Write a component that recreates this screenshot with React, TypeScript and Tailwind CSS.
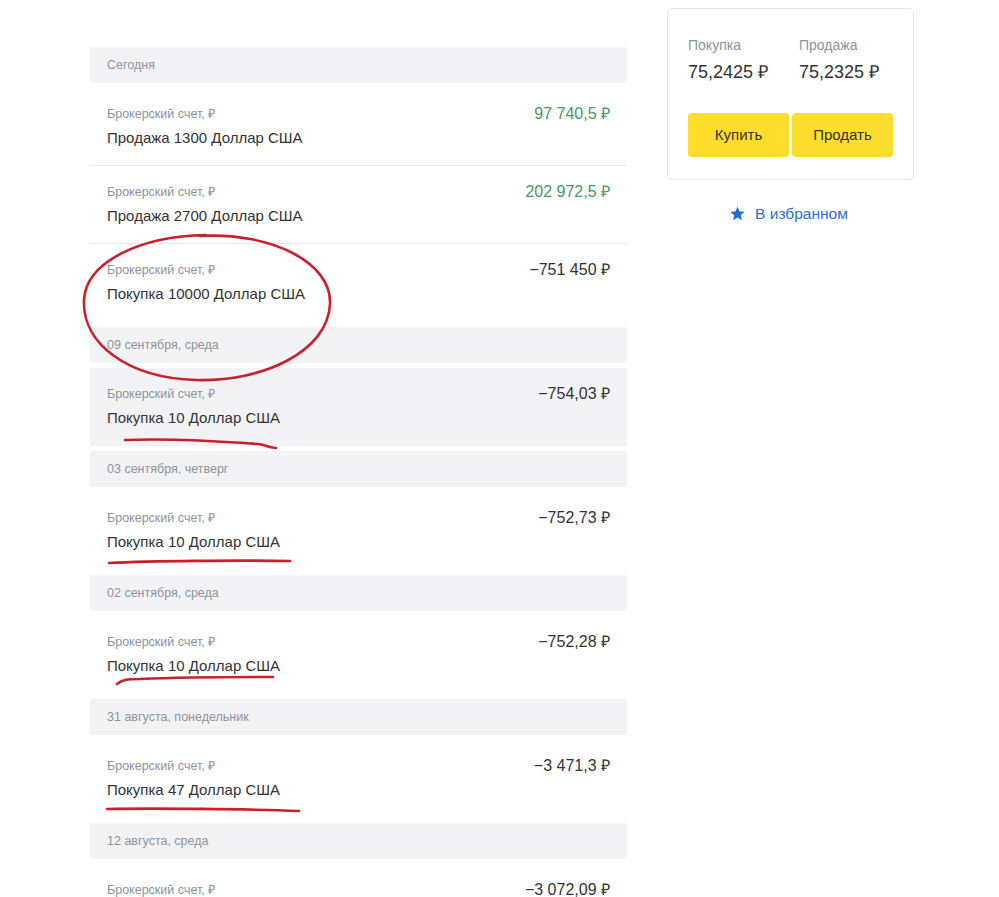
import React from 'react'

type Op = { title: string; amount: string; positive?: boolean; hovered?: boolean }
type Group = { date: string; ops: Op[] }

const groups: Group[] = [
    {
        date: 'Сегодня',
        ops: [
            { title: 'Продажа 1300 Доллар США', amount: '97 740,5 ₽', positive: true },
            { title: 'Продажа 2700 Доллар США', amount: '202 972,5 ₽', positive: true },
            { title: 'Покупка 10000 Доллар США', amount: '−751 450 ₽' },
        ],
    },
    { date: '09 сентября, среда', ops: [{ title: 'Покупка 10 Доллар США', amount: '−754,03 ₽', hovered: true }] },
    { date: '03 сентября, четверг', ops: [{ title: 'Покупка 10 Доллар США', amount: '−752,73 ₽' }] },
    { date: '02 сентября, среда', ops: [{ title: 'Покупка 10 Доллар США', amount: '−752,28 ₽' }] },
    { date: '31 августа, понедельник', ops: [{ title: 'Покупка 47 Доллар США', amount: '−3 471,3 ₽' }] },
    { date: '12 августа, среда', ops: [{ title: 'Покупка 10 Доллар США', amount: '−3 072,09 ₽' }] },
]

const OpRow = ({ op, last }: { op: Op; last: boolean }) => (
    <div className={`h-[78px] flex justify-between px-[17px] pt-[16px] ${op.hovered ? 'bg-[#f3f3f6]' : ''} ${last ? '' : 'border-b border-[#e7e8ea]'}`}>
        <div className="flex flex-col">
            <span className="text-[12.5px] leading-[20px] text-[#8d939b]">Брокерский счет, ₽</span>
            <span className="text-[15px] leading-[20px] mt-[4px] text-[#333]">{op.title}</span>
        </div>
        <span className={`text-[16px] leading-[20px] ${op.positive ? 'text-[#46995f]' : 'text-[#333]'}`}>{op.amount}</span>
    </div>
)

const Annotations = () => (
    <svg className="absolute inset-0 pointer-events-none" width="999" height="897" viewBox="0 0 999 897" fill="none">
        <path
            d="M200 236 C 270 232, 332 262, 330 304 C 328 352, 262 382, 196 380 C 128 378, 82 344, 84 300 C 86 262, 140 236, 206 235"
            stroke="#c8202c" strokeWidth="2.6" strokeLinecap="round"
        />
        <path d="M125 440 C 170 438, 230 442, 258 444 C 266 445, 270 448, 276 448" stroke="#c8202c" strokeWidth="2.6" strokeLinecap="round" />
        <path d="M109 563 C 150 561, 240 560, 290 561" stroke="#c8202c" strokeWidth="2.6" strokeLinecap="round" />
        <path d="M117 684 C 122 680, 126 679, 140 679 C 190 677, 250 677, 273 677" stroke="#c8202c" strokeWidth="2.6" strokeLinecap="round" />
        <path d="M107 809 C 150 808, 250 809, 299 811" stroke="#c8202c" strokeWidth="2.6" strokeLinecap="round" />
    </svg>
)

export default function App() {
    return (
        <div className="relative w-[999px] h-[897px] overflow-hidden bg-white" style={{ fontFamily: '"Liberation Sans", Arial, sans-serif' }}>
            <div className="flex gap-[40px] pl-[90px]">
                <div className="w-[537px] pt-[47px] flex flex-col">
                    {groups.map((g) => (
                        <div key={g.date} className="flex flex-col">
                            <div className="h-[36px] bg-[#f3f3f6] flex items-center px-[17px] text-[12.5px] text-[#8d939b]">{g.date}</div>
                            <div className="py-[5px]">
                                {g.ops.map((op, i) => (
                                    <OpRow key={i} op={op} last={i === g.ops.length - 1} />
                                ))}
                            </div>
                        </div>
                    ))}
                </div>
                <div className="w-[247px] pt-[8px] flex flex-col">
                    <div className="border border-[#e5e6e8] rounded-[5px] px-[20px] pt-[26px] pb-[22px]">
                        <div className="flex gap-[30px]">
                            <div className="flex flex-col w-[81px]">
                                <span className="text-[14px] leading-[20px] text-[#8d939b]">Покупка</span>
                                <span className="text-[18px] leading-[22px] mt-[6px] text-[#333]">75,2425 ₽</span>
                            </div>
                            <div className="flex flex-col">
                                <span className="text-[14px] leading-[20px] text-[#8d939b]">Продажа</span>
                                <span className="text-[18px] leading-[22px] mt-[6px] text-[#333]">75,2325 ₽</span>
                            </div>
                        </div>
                        <div className="flex gap-[3px] mt-[30px]">
                            <button className="w-[101px] h-[44px] rounded-[4px] bg-[#ffdd2d] text-[15px] text-[#333]">Купить</button>
                            <button className="w-[101px] h-[44px] rounded-[4px] bg-[#ffdd2d] text-[15px] text-[#333]">Продать</button>
                        </div>
                    </div>
                    <div className="flex items-center justify-center gap-[9px] mt-[22px] pr-[4px]">
                        <svg width="17" height="17" viewBox="0 0 24 24">
                            <path d="M12 2.5l2.9 6.6 7.1.6-5.4 4.7 1.6 7-6.2-3.7-6.2 3.7 1.6-7L2 9.7l7.1-.6z" fill="#1f6ed4" />
                        </svg>
                        <span className="text-[15.5px] text-[#2b6fd6]">В избранном</span>
                    </div>
                </div>
            </div>
            <Annotations />
        </div>
    )
}
